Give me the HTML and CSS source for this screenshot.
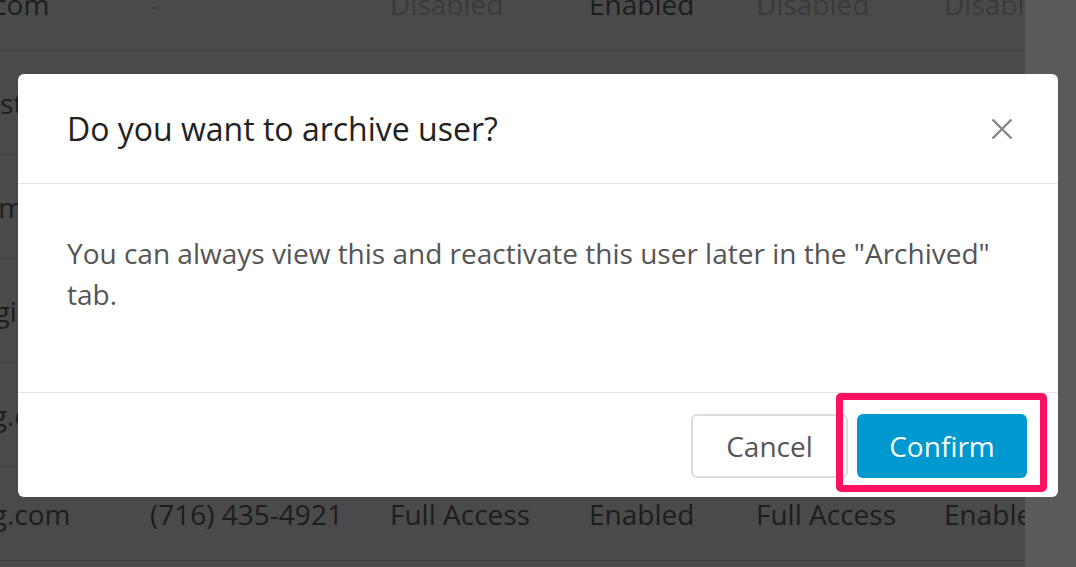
FILE: index.html
```html
<!DOCTYPE html>
<html lang="en">
<head>
<meta charset="utf-8">
<title>Archive user</title>
<link rel="stylesheet" href="styles.css">
</head>
<body>
<div class="page">
  <div class="content">
    <div class="table">
      <div class="row row-short">
        <span class="cell">hanna.leeson@gmail.com</span>
        <span class="cell muted">-</span>
        <span class="cell muted">Disabled</span>
        <span class="cell">Enabled</span>
        <span class="cell muted">Disabled</span>
        <span class="cell muted">Disabled</span>
      </div>
      <div class="row">
        <span class="cell">pete.grant@wondertest.com</span>
        <span class="cell">(716) 435-4921</span>
        <span class="cell">Full Access</span>
        <span class="cell">Enabled</span>
        <span class="cell">Full Access</span>
        <span class="cell">Enabled</span>
      </div>
      <div class="row">
        <span class="cell">lauren.benson@mycomp.com</span>
        <span class="cell">(716) 435-4921</span>
        <span class="cell">Full Access</span>
        <span class="cell">Enabled</span>
        <span class="cell">Full Access</span>
        <span class="cell">Enabled</span>
      </div>
      <div class="row">
        <span class="cell">sarah.moss@rovinglogins.com</span>
        <span class="cell">(716) 435-4921</span>
        <span class="cell">Full Access</span>
        <span class="cell">Enabled</span>
        <span class="cell">Full Access</span>
        <span class="cell">Enabled</span>
      </div>
      <div class="row">
        <span class="cell">nick.jones@rovingblog.org</span>
        <span class="cell">(716) 435-4921</span>
        <span class="cell">Full Access</span>
        <span class="cell">Enabled</span>
        <span class="cell">Full Access</span>
        <span class="cell">Enabled</span>
      </div>
      <div class="row row-short">
        <span class="cell">nick.jones@rovingblog.com</span>
        <span class="cell">(716) 435-4921</span>
        <span class="cell">Full Access</span>
        <span class="cell">Enabled</span>
        <span class="cell">Full Access</span>
        <span class="cell">Enabled</span>
      </div>
    </div>
  </div>
  <div class="scroll-track"></div>
</div>

<div class="overlay">
  <div class="modal" role="dialog" aria-labelledby="modal-title">
    <div class="modal-header">
      <h2 class="modal-title" id="modal-title">Do you want to archive user?</h2>
      <button class="close-btn" aria-label="Close">
        <svg width="22" height="22" viewBox="0 0 22 22"><path d="M1.5 1.5 L20.5 20.5 M20.5 1.5 L1.5 20.5" stroke="#858585" stroke-width="2.4" stroke-linecap="butt" fill="none"/></svg>
      </button>
    </div>
    <div class="modal-body">
      You can always view this and reactivate this user later in the "Archived" tab.
    </div>
    <div class="modal-footer">
      <button class="btn btn-cancel">Cancel</button>
      <div class="highlight-wrap">
        <button class="btn btn-confirm">Confirm</button>
        <span class="highlight"></span>
      </div>
    </div>
  </div>
</div>
</body>
</html>
```

FILE: styles.css
```css
* { box-sizing: border-box; }

html, body {
  margin: 0;
  padding: 0;
  height: 100%;
  overflow: hidden;
}

body {
  font-family: "Open Sans", "Noto Sans", sans-serif;
  background: #4a4a4a;
}

.page {
  display: flex;
  height: 100%;
}

.content {
  flex: 1;
  overflow: hidden;
  background: #4a4a4a;
}

.scroll-track {
  width: 51px;
  background: #5a5a5a;
}

.table {
  width: 1500px;
  margin-top: -43px;
  margin-left: -286px;
}

.row {
  display: grid;
  grid-template-columns: 436px 240px 199px 167px 188px 1fr;
  align-items: center;
  height: 104px;
  border-bottom: 1px solid #414141;
  font-size: 28px;
  color: #1d1d1d;
  white-space: nowrap;
}

.row-short {
  height: 94px;
}

.cell {
  overflow: hidden;
}

.muted {
  color: #3a3a3a;
}

.overlay {
  position: fixed;
  inset: 0;
  display: flex;
  justify-content: center;
  align-items: flex-start;
  padding-top: 74px;
}

.modal {
  width: 1040px;
  background: #fff;
  border-radius: 6px;
}

.modal-header {
  display: flex;
  align-items: center;
  justify-content: space-between;
  padding: 35px 45px 34px 49px;
  border-bottom: 1px solid #e6e6e6;
}

.modal-title {
  margin: 0;
  font-size: 32px;
  line-height: 40px;
  font-weight: 400;
  color: #222;
}

.close-btn {
  border: 0;
  background: none;
  padding: 0;
  width: 22px;
  height: 22px;
  display: flex;
}

.modal-body {
  padding: 49px 49px 77px;
  font-size: 28px;
  line-height: 41px;
  color: #555;
}

.modal-footer {
  display: flex;
  justify-content: flex-end;
  gap: 9px;
  padding: 21px 31px 19px;
  border-top: 1px solid #e6e6e6;
}

.btn {
  height: 64px;
  font-family: "Open Sans", "Noto Sans", sans-serif;
  font-size: 28px;
  border-radius: 6px;
  padding: 0;
}

.btn-cancel {
  width: 157px;
  background: #fff;
  border: 2px solid #dddddd;
  color: #555;
}

.highlight-wrap {
  position: relative;
  display: flex;
}

.btn-confirm {
  width: 170px;
  background: #0099cf;
  border: 0;
  color: #fff;
}

.highlight {
  position: absolute;
  top: -21px;
  left: -21px;
  right: -20px;
  bottom: -14px;
  border: 7px solid #ff1160;
  border-radius: 5px;
  pointer-events: none;
}
```
